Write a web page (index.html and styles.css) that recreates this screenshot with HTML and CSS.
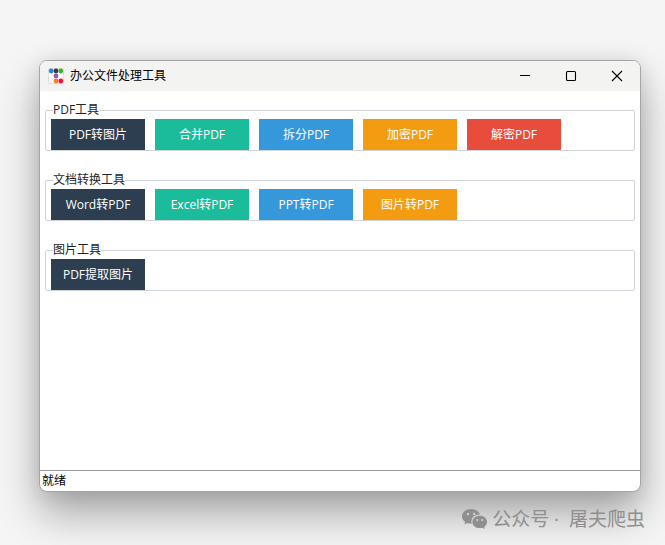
FILE: index.html
```html
<!DOCTYPE html>
<html lang="zh-CN">

<head>
    <meta charset="UTF-8">
    <meta name="viewport" content="width=device-width, initial-scale=1.0">
    <title>办公文件处理工具</title>
    <link rel="stylesheet" href="styles.css">
</head>

<body>
    <main class="window">
        <header class="titlebar">
            <svg class="logo" width="16" height="16" viewBox="0 0 16 16" aria-hidden="true">
                <rect x=".5" y=".5" width="15" height="15" rx="1.5" fill="#fff" stroke="#dedede"/>
                <circle cx="3.200" cy="3" r="2.400" fill="#2684e8"/>
                <circle cx="8" cy="3" r="2.400" fill="#353c46"/>
                <circle cx="12.800" cy="3" r="2.400" fill="#39b51c"/>
                <circle cx="8" cy="8" r="2.400" fill="#9b50c6"/>
                <circle cx="8" cy="13" r="2.400" fill="#fb7c20"/>
                <circle cx="12.800" cy="13" r="2.400" fill="#fb0a38"/>
            </svg>
            <h1>办公文件处理工具</h1>
            <div class="controls">
                <button type="button" aria-label="最小化">
                    <svg width="12" height="12" viewBox="0 0 12 12"><path d="M1 5.500h10"/></svg>
                </button>
                <button type="button" aria-label="最大化">
                    <svg width="12" height="12" viewBox="0 0 12 12"><rect x="1.5" y="1.5" width="9" height="9" rx="1"/></svg>
                </button>
                <button type="button" aria-label="关闭">
                    <svg width="12" height="12" viewBox="0 0 12 12"><path d="M1 1l10 10M11 1L1 11"/></svg>
                </button>
            </div>
        </header>

        <div class="content">
            <fieldset>
                <legend>PDF工具</legend>
                <div class="tools">
                    <button type="button" class="dark">PDF转图片</button>
                    <button type="button" class="green">合并PDF</button>
                    <button type="button" class="blue">拆分PDF</button>
                    <button type="button" class="orange">加密PDF</button>
                    <button type="button" class="red">解密PDF</button>
                </div>
            </fieldset>
            <fieldset>
                <legend>文档转换工具</legend>
                <div class="tools">
                    <button type="button" class="dark">Word转PDF</button>
                    <button type="button" class="green">Excel转PDF</button>
                    <button type="button" class="blue">PPT转PDF</button>
                    <button type="button" class="orange">图片转PDF</button>
                </div>
            </fieldset>
            <fieldset>
                <legend>图片工具</legend>
                <div class="tools">
                    <button type="button" class="dark">PDF提取图片</button>
                </div>
            </fieldset>
        </div>

        <div class="status" role="status">就绪</div>
    </main>

    <footer class="mark">
        <svg width="26" height="22" viewBox="0 0 26 22" aria-hidden="true">
            <path fill="#8f8f8f" fill-rule="evenodd" d="M9 1C4 1 0 4.200 0 8.300c0 2.300 1.200 4.200 3.200 5.600L2.400 16.500l3.100-1.600c1.200.4 2.500.6 4.300.5-1.600-5 2.500-9.200 8.200-8.800C17 3.300 13.300 1 9 1zM6 4.800a1.200 1.200 0 1 1 0 2.400 1.200 1.200 0 0 1 0-2.400zM12.200 4.800a1.200 1.200 0 1 1 0 2.400 1.200 1.200 0 0 1 0-2.400z"/>
            <path fill="#8f8f8f" fill-rule="evenodd" d="M17.800 7.800c-4.200 0-7.400 2.700-7.400 6.100s3.200 6.200 7.400 6.200c.9 0 1.800-.1 2.600-.4l2.400 1.300-.6-2.200c1.700-1.200 2.800-2.900 2.800-4.900 0-3.400-3.200-6.100-7.200-6.100zM15.300 11a1 1 0 1 1 0 2 1 1 0 0 1 0-2zM20.200 11a1 1 0 1 1 0 2 1 1 0 0 1 0-2z"/>
        </svg>
        <span>公众号 ·&nbsp; 屠夫爬虫</span>
    </footer>
</body>

</html>
```
FILE: styles.css
```css
* {
    box-sizing: border-box;
}

body {
    display: flex;
    flex-direction: column;
    min-height: 100vh;
    margin: 0;
    padding-top: 60px;
    overflow: hidden;
    background-color: #f5f5f5;
    color: #111;
    font: 12px/18px "Open Sans", "Noto Sans CJK SC", sans-serif;
}

.window {
    display: flex;
    flex-direction: column;
    flex: 1;
    margin: 0 24px 0 39px;
    border: 1px solid #a5a5a5;
    border-radius: 8px;
    overflow: hidden;
    background-color: #fff;
    box-shadow: 0 22px 42px rgba(0, 0, 0, .32), 0 2px 20px rgba(0, 0, 0, .1);
}

.titlebar {
    display: flex;
    align-items: center;
    height: 30px;
    padding-left: 8px;
    background-color: #f3f3f1;
}

.titlebar h1 {
    margin: 0 auto 0 6px;
    font-size: 12px;
    font-weight: 400;
    color: #000;
}

.controls {
    display: flex;
    height: 100%;
}

.controls button {
    display: flex;
    align-items: center;
    justify-content: center;
    width: 46px;
    padding: 0;
    border: 0;
    background: none;
}

.controls svg {
    fill: none;
    stroke: #000;
    stroke-width: 1.1;
}

.content {
    flex: 1;
    padding: 10px 5px;
}

fieldset {
    min-width: 0;
    margin: 0 0 20px;
    padding: 0 5px;
    border: 1px solid #ced4da;
    border-radius: 2px;
}

legend {
    margin-left: 2px;
    padding: 0;
    color: #212529;
}

.tools {
    display: flex;
    flex-wrap: wrap;
    gap: 10px;
}

.tools button {
    width: 94px;
    height: 31px;
    padding: 0;
    border: 0;
    color: #fff;
    font: inherit;
}

.dark {
    background-color: #2c3e50;
}

.green {
    background-color: #1abc9c;
}

.blue {
    background-color: #3498db;
}

.orange {
    background-color: #f39c12;
}

.red {
    background-color: #e74c3c;
}

.status {
    height: 21px;
    padding: 0 2px;
    border-top: 1px solid #999;
    line-height: 20px;
    color: #000;
}

.mark {
    display: flex;
    align-items: center;
    justify-content: flex-end;
    gap: 4px;
    height: 53px;
    padding-right: 20px;
    color: #8f8f8f;
    font: 19px/24px "Open Sans", "Noto Sans CJK SC", sans-serif;
    z-index: 1;
}
```
